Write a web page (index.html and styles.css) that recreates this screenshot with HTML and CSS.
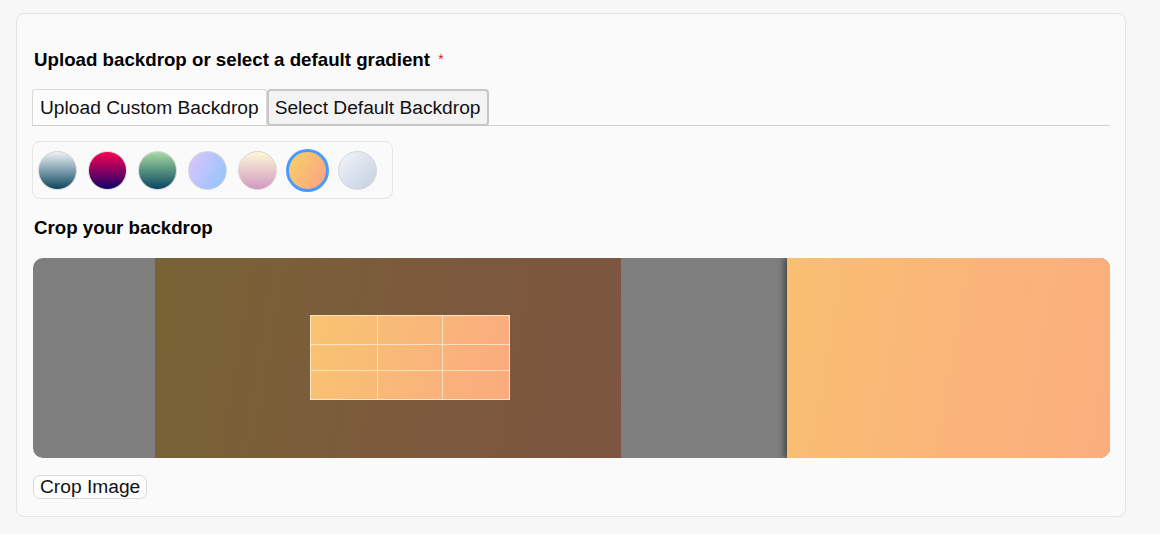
FILE: index.html
```html
<!DOCTYPE html>
<html>
<head>
<meta charset="utf-8">
<link rel="stylesheet" href="styles.css">
</head>
<body>
<div class="card">
  <div class="label">Upload backdrop or select a default gradient <span class="req">*</span></div>
  <div class="tabs">
    <button class="tab">Upload Custom Backdrop</button>
    <button class="tab active">Select Default Backdrop</button>
  </div>
  <div class="swatches">
    <span class="sw g1"></span>
    <span class="sw g2"></span>
    <span class="sw g3"></span>
    <span class="sw g4"></span>
    <span class="sw g5"></span>
    <span class="sw g6 selected"></span>
    <span class="sw g7"></span>
  </div>
  <div class="label crop-label">Crop your backdrop</div>
  <div class="cropper">
    <div class="pad-left"></div>
    <div class="image">
      <div class="cropbox">
        <div class="cell"></div><div class="cell"></div><div class="cell"></div>
        <div class="cell"></div><div class="cell"></div><div class="cell"></div>
        <div class="cell"></div><div class="cell"></div><div class="cell"></div>
      </div>
    </div>
    <div class="pad-mid"></div>
    <div class="preview"></div>
  </div>
  <button class="crop-btn">Crop Image</button>
</div>
</body>
</html>
```
FILE: styles.css
```css
html, body {
  margin: 0;
  padding: 0;
  background: #f7f7f7;
  font-family: "Liberation Sans", Arial, sans-serif;
  color: #111;
}
.card {
  margin: 13px 0 0 16px;
  width: 1110px;
  height: 504px;
  box-sizing: border-box;
  border: 1px solid #e4e4e4;
  border-radius: 8px;
  background: #fafafa;
  padding: 35px 15px 0 15px;
}
.label {
  font-weight: bold;
  font-size: 18.72px;
  line-height: 22px;
  padding-left: 2px;
  color: #000;
}
.req {
  color: #e0112b;
  font-weight: normal;
  font-size: 14px;
  margin-left: 3px;
  position: relative;
  top: -2px;
}
.tabs {
  display: flex;
  margin-top: 17px;
  border-bottom: 1px solid #cfcfcf;
}
.tab {
  font-family: "Liberation Sans", Arial, sans-serif;
  font-size: 19.2px;
  color: #111;
  height: 36px;
  padding: 0 7px;
  margin: 0;
  background: #fdfdfd;
  border: 1px solid #d9d9d9;
  border-bottom: none;
  border-radius: 3px 3px 0 0;
}
.tab.active {
  background: #f3f3f3;
  border: 2px solid #c6c6c6;
  border-radius: 4px;
  padding: 0 6px;
  height: 37px;
  margin-bottom: -1px;
}
.swatches {
  display: inline-flex;
  align-items: center;
  gap: 11px;
  margin-top: 15px;
  height: 58px;
  box-sizing: border-box;
  padding: 0 15px 0 5px;
  border: 1px solid #e6e6e6;
  border-radius: 8px;
}
.sw {
  display: block;
  width: 37px;
  height: 37px;
  border-radius: 50%;
  border: 1px solid #d6d6d6;
}
.sw.selected {
  border: 3px solid #4b9bff;
  width: 37px;
  height: 37px;
  margin: 0 -2px;
}
.g1 { background: linear-gradient(to bottom, #eef2f4, #7f9fae 50%, #0d475c); }
.g2 { background: linear-gradient(to bottom, #fb0052, #8a0060 50%, #12006a); }
.g3 { background: linear-gradient(to bottom, #a8dba5, #4d8a7c 55%, #0a4562); }
.g4 { background: linear-gradient(120deg, #dfc4fc, #8ec5fc); }
.g5 { background: linear-gradient(to top, #d299c2, #fef9d7); }
.g6 { background: linear-gradient(120deg, #f6d365, #fda085); }
.g7 { background: linear-gradient(135deg, #f3f5f9, #c3cfe2); }
.crop-label {
  margin-top: 18px;
}
.cropper {
  display: flex;
  height: 200px;
  margin-top: 19px;
  margin-left: 1px;
  border-radius: 10px;
  overflow: hidden;
  background: #7e7e7e;
}
.pad-left { width: 122px; flex: none; }
.image {
  width: 466px;
  flex: none;
  background: linear-gradient(100deg, #786334, #7c5a3c 55%, #7d5540);
  padding: 57px 0 0 155px;
  box-sizing: border-box;
}
.cropbox {
  width: 200px;
  height: 85px;
  box-sizing: border-box;
  border: 1px solid #fde3c6;
  background: linear-gradient(110deg, #f8c471, #f9b67a 55%, #fbaa7e);
  display: grid;
  grid-template-columns: 67px 65px 1fr;
  grid-template-rows: 29px 26px 1fr;
}
.cell {
  border-right: 1px solid rgba(255, 240, 220, 0.7);
  border-bottom: 1px solid rgba(255, 240, 220, 0.7);
}
.cell:nth-child(3n) { border-right: none; }
.cell:nth-child(n+7) { border-bottom: none; }
.pad-mid { width: 166px; flex: none; }
.preview {
  flex: 1;
  background: linear-gradient(100deg, #f9bf71, #fab47a 55%, #fbae7d);
  box-shadow: -3px 0 6px rgba(0, 0, 0, 0.45);
}
.crop-btn {
  display: block;
  margin-top: 17px;
  margin-left: 1px;
  font-family: "Liberation Sans", Arial, sans-serif;
  font-size: 19.2px;
  color: #111;
  height: 24px;
  padding: 0 6px;
  line-height: 20px;
  background: #fdfdfd;
  border: 1px solid #d9d9d9;
  border-radius: 7px;
}
```
